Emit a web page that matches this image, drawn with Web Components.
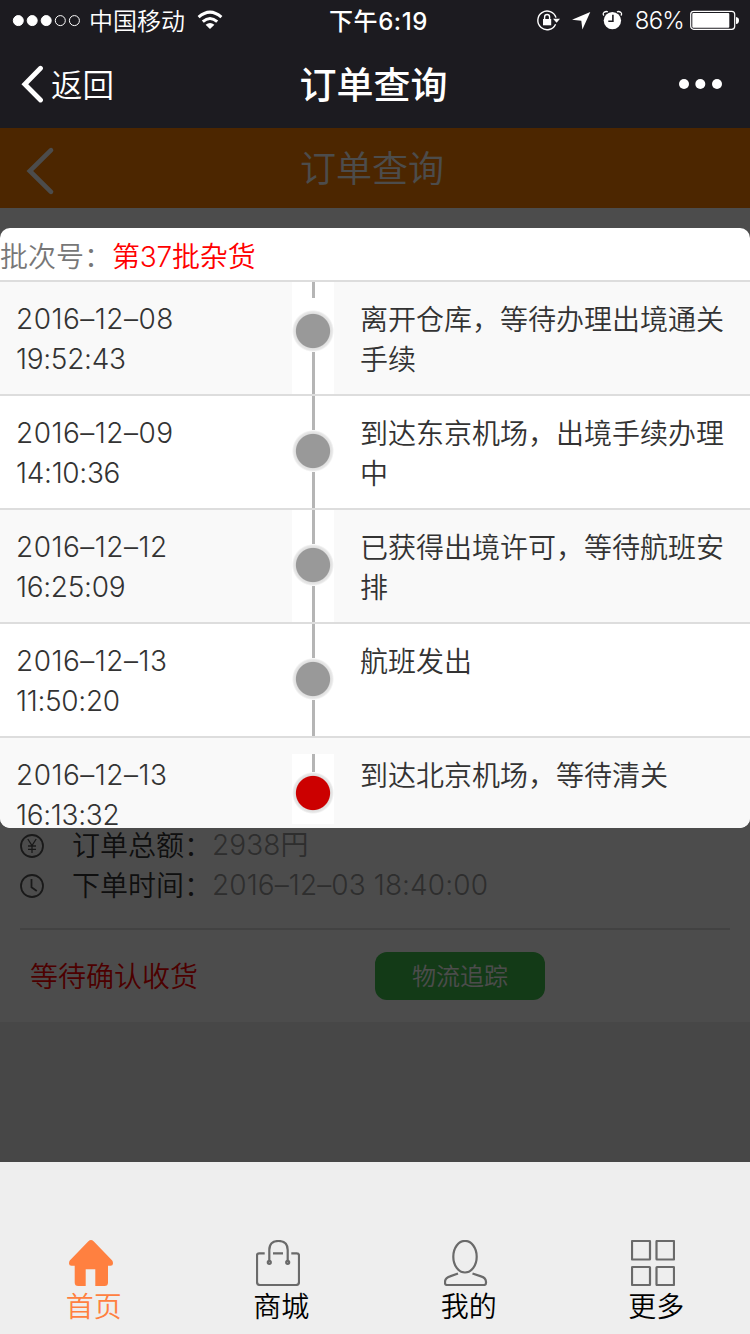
<!DOCTYPE html>
<html lang="zh-CN">
<head>
<meta charset="utf-8">
<title>订单查询</title>
<style>
    html, body {
        margin: 0;
        padding: 0;
    }
    body {
        width: 750px;
        height: 1334px;
        overflow: hidden;
        font-family: Inter, "Noto Sans CJK SC", sans-serif;
        font-size: 28px;
        font-weight: 350;
        line-height: 40px;
        background: #eee;
    }
</style>
</head>
<body>
<phone-screen>
    <status-bar slot="top" carrier="中国移动" time="下午6:19" battery="86%"></status-bar>
    <wechat-nav slot="top" back="返回">订单查询</wechat-nav>
    <order-page slot="page">
        <page-header slot="header">订单查询</page-header>
        <order-field icon="yen" label="订单总额：">2938円</order-field>
        <order-field icon="clock" label="下单时间：">2016–12–03 18:40:00</order-field>
        <order-actions slot="actions" status="等待确认收货">物流追踪</order-actions>
    </order-page>
    <tracking-popup slot="popup" label="批次号：" batch="第37批杂货">
        <tracking-row class="first odd" date="2016–12–08" time="19:52:43">离开仓库，等待办理出境通关手续</tracking-row>
        <tracking-row date="2016–12–09" time="14:10:36">到达东京机场，出境手续办理中</tracking-row>
        <tracking-row class="odd" date="2016–12–12" time="16:25:09">已获得出境许可，等待航班安排</tracking-row>
        <tracking-row date="2016–12–13" time="11:50:20">航班发出</tracking-row>
        <tracking-row class="last odd" date="2016–12–13" time="16:13:32">到达北京机场，等待清关</tracking-row>
    </tracking-popup>
    <tab-bar slot="tabs">
        <tab-item icon="home" class="active">首页</tab-item>
        <tab-item icon="bag">商城</tab-item>
        <tab-item icon="user">我的</tab-item>
        <tab-item icon="grid">更多</tab-item>
    </tab-bar>
</phone-screen>

<script>
const ICONS = {
    yen: `<svg width="24" height="24" viewBox="0 0 24 24" fill="none" stroke="currentColor" stroke-width="1.8"><circle cx="12" cy="12" r="11"/><path d="M7.8 5L12 11.5L16.2 5M12 11.5V19M8 12H16M8 15.4H16" stroke-width="1.3"/></svg>`,
    clock: `<svg width="24" height="24" viewBox="0 0 24 24" fill="none" stroke="currentColor" stroke-width="1.8"><circle cx="12" cy="12" r="11"/><path d="M11.5 5V13.2L16.8 17"/></svg>`,
    home: `<svg width="44" height="46" viewBox="0 0 44 46" fill="currentColor"><path d="M19.4 1.2Q22 -1 24.6 1.2L43.2 20.6Q44 21.6 44 23.4Q44 25.7 41.5 25.7H39V42.5Q39 46 35.5 46H26.3V29.3H16.7V46H9.2Q5.7 46 5.7 42.5V25.7H2.5Q0 25.7 0 23.4Q0 21.6 .8 20.6Z"/></svg>`,
    bag: `<svg width="44" height="46" viewBox="0 0 44 46" fill="none" stroke="#6a6a6a" stroke-width="2.2"><path d="M8.7 13.3H3.2Q1 13.3 1 15.5V42Q1 45 4 45H40Q43 45 43 42V15.5Q43 13.3 40.8 13.3H35.3M17 13.3H27"/><path d="M13.3 22V10Q13.3 1 22.5 1Q31.7 1 31.7 10V22"/><circle cx="13.3" cy="22.3" r="1.5"/><circle cx="31.7" cy="22.3" r="1.5"/></svg>`,
    user: `<svg width="44" height="46" viewBox="0 0 44 46" fill="none" stroke="#6a6a6a" stroke-width="2.2"><ellipse cx="21" cy="16.7" rx="11.7" ry="15.8"/><path d="M14 33.5L6 36.4Q1 38 1 42V43Q1 45 3 45H40Q42 45 42 43V42Q42 38 37 36.4L28.5 33.5"/></svg>`,
    grid: `<svg width="44" height="46" viewBox="0 0 44 46" fill="none" stroke="#6a6a6a" stroke-width="2.2"><rect x="1" y="1" width="18" height="18.5" rx=".5"/><rect x="25.5" y="1" width="17.5" height="18.5" rx=".5"/><rect x="1" y="27" width="18" height="18" rx=".5"/><rect x="25.5" y="27" width="17.5" height="18" rx=".5"/></svg>`
};

class PhoneScreen extends HTMLElement {
    constructor() {
        super();
        this.attachShadow({mode: "open"});
        this.shadowRoot.innerHTML = `
            <style>
                :host {
                    display: flex;
                    flex-direction: column;
                    height: 1334px;
                }
                #top {
                    height: 128px;
                    background: #1c1b20;
                    color: white;
                }
                #page {
                    flex: 1;
                    position: relative;
                    overflow: hidden;
                }
                #mask {
                    position: absolute;
                    inset: 0;
                    background: rgba(0,0,0,0.7);
                }
                #popup {
                    position: absolute;
                    top: 100px;
                    left: 0;
                    right: 0;
                }
            </style>
            <div id="top"><slot name="top"></slot></div>
            <div id="page">
                <slot name="page"></slot>
                <div id="mask"></div>
                <div id="popup"><slot name="popup"></slot></div>
            </div>
            <slot name="tabs"></slot>
        `;
    }
}

class StatusBar extends HTMLElement {
    constructor() {
        super();
        this.attachShadow({mode: "open"});
        this.shadowRoot.innerHTML = `
            <style>
                :host {
                    display: grid;
                    grid-template-columns: 1fr auto 1fr;
                    height: 40px;
                    font-size: 24px;
                    line-height: 42px;
                }
                div {
                    display: flex;
                    align-items: flex-start;
                }
                svg {
                    display: block;
                }
                #left {
                    padding-left: 12px;
                }
                #left span {
                    margin: 0 12px 0 8px;
                }
                #left span, #time {
                    line-height: 43px;
                }
                #time {
                    font-weight: 500;
                    letter-spacing: 0.6px;
                    padding-left: 7px;
                }
                #right {
                    justify-content: flex-end;
                    padding-right: 11px;
                }
                #right span {
                    margin: 0 6px 0 11px;
                    letter-spacing: -0.8px;
                }
            </style>
            <div id="left">
                <svg width="69" height="40" fill="white" stroke="white">
                    <circle cx="6.3" cy="20.6" r="5"/><circle cx="20.2" cy="20.6" r="5"/><circle cx="34.2" cy="20.6" r="5"/>
                    <circle cx="48.3" cy="20.6" r="5" fill="none"/><circle cx="62.4" cy="20.6" r="5" fill="none"/>
                </svg>
                <span>${this.getAttribute("carrier")}</span>
                <svg width="26" height="40" fill="none" stroke="white" stroke-width="3">
                    <path d="M1.6 17.2Q13 7 24.4 17.2" /><path d="M5.8 21.7Q13 15.3 20.2 21.7"/>
                    <path d="M13 29L8.6 24.7Q13 21.4 17.4 24.7Z" fill="white" stroke="none"/>
                </svg>
            </div>
            <div id="time">${this.getAttribute("time")}</div>
            <div id="right">
                <svg width="88" height="40" viewBox="536 0 88 40" fill="white">
                    <path d="M555.6 24.2A9.3 9.3 0 1 1 556 17.6" fill="none" stroke="white" stroke-width="1.4"/>
                    <path d="M553 18.8H560L556.6 22.8Z"/>
                    <rect x="543" y="19" width="8.2" height="6.3"/>
                    <path d="M544.6 19.5V17A2.5 2.5 0 0 1 549.6 17V19.5" fill="none" stroke="white" stroke-width="1.4"/>
                    <path d="M590.3 12L572 19.7L581.3 20.7L582.4 29.6Z"/>
                    <circle cx="612.4" cy="20.6" r="8.7"/>
                    <path d="M604 15.4Q602.4 14 604 12.4Q606.4 10.8 607.8 12M620.8 15.4Q622.4 14 620.8 12.4Q618.4 10.8 617 12" fill="none" stroke="white" stroke-width="1.3"/>
                    <path d="M612.9 14.8V21.2H608.3" fill="none" stroke="#1c1b20" stroke-width="1.6"/>
                </svg>
                <span>${this.getAttribute("battery")}</span>
                <svg width="49" height="40" fill="white">
                    <rect x=".7" y="11.3" width="44" height="18" rx="3" fill="none" stroke="white" stroke-width="1.2"/>
                    <rect x="2.3" y="13" width="37" height="14.8" rx="1"/>
                    <path d="M46 17Q49 17.5 49 20.4Q49 23.4 46 24Z"/>
                </svg>
            </div>
        `;
    }
}

class WechatNav extends HTMLElement {
    constructor() {
        super();
        this.attachShadow({mode: "open"});
        this.shadowRoot.innerHTML = `
            <style>
                :host {
                    display: grid;
                    grid-template-columns: 1fr auto 1fr;
                    align-items: center;
                    height: 88px;
                }
                #back {
                    display: flex;
                    align-items: center;
                    gap: 8px;
                    padding-left: 20px;
                    font-size: 31.5px;
                }
                #back span {
                    padding-top: 3px;
                }
                #title {
                    font-size: 37px;
                    font-weight: 500;
                    padding: 3px 3px 0 0;
                }
                #more {
                    justify-self: end;
                    margin-right: 28px;
                }
            </style>
            <div id="back">
                <svg width="23" height="38" fill="none" stroke="white" stroke-width="4.8"><path d="M20.5 3.2L4.8 19.2L20.5 35" stroke-linecap="round"/></svg>
                <span>${this.getAttribute("back")}</span>
            </div>
            <div id="title"><slot></slot></div>
            <svg id="more" width="43" height="10" fill="white"><circle cx="5" cy="5" r="5"/><circle cx="21.3" cy="5" r="5"/><circle cx="38" cy="5" r="5"/></svg>
        `;
    }
}

class OrderPage extends HTMLElement {
    constructor() {
        super();
        this.attachShadow({mode: "open"});
        this.shadowRoot.innerHTML = `
            <style>
                :host {
                    display: block;
                }
                #card {
                    display: flex;
                    flex-direction: column;
                    justify-content: flex-end;
                    box-sizing: border-box;
                    height: 814px;
                    background: white;
                }
                #fields {
                    padding: 0 20px 22px;
                }
            </style>
            <slot name="header"></slot>
            <div id="card">
                <div id="fields"><slot></slot></div>
                <slot name="actions"></slot>
            </div>
        `;
    }
}

class PageHeader extends HTMLElement {
    constructor() {
        super();
        this.attachShadow({mode: "open"});
        this.shadowRoot.innerHTML = `
            <style>
                :host {
                    display: grid;
                    grid-template-columns: 1fr auto 1fr;
                    height: 80px;
                    line-height: 83px;
                    font-size: 36px;
                    color: white;
                    background: #ff8000;
                }
                svg {
                    margin: 18px 0 0 25px;
                }
                div {
                    padding-right: 6px;
                }
            </style>
            <svg width="30" height="50" fill="none" stroke="white" stroke-width="4.6"><path d="M26 4.2L4.8 25L26 45.8" stroke-linecap="round"/></svg>
            <div><slot></slot></div>
        `;
    }
}

class OrderField extends HTMLElement {
    constructor() {
        super();
        this.attachShadow({mode: "open"});
        this.shadowRoot.innerHTML = `
            <style>
                :host {
                    display: flex;
                    height: 40px;
                    color: #999;
                    white-space: nowrap;
                }
                svg {
                    display: block;
                    margin: 8px 28px 0 0;
                    color: #555;
                }
                label {
                    width: 140px;
                    color: #333;
                }
                span {
                    letter-spacing: 0.1px;
                    margin-top: -1px;
                }
            </style>
            ${ICONS[this.getAttribute("icon")]}
            <label>${this.getAttribute("label")}</label>
            <span><slot></slot></span>
        `;
    }
}

class OrderActions extends HTMLElement {
    constructor() {
        super();
        this.attachShadow({mode: "open"});
        this.shadowRoot.innerHTML = `
            <style>
                :host {
                    display: grid;
                    grid-template-columns: 355px 170px;
                    margin: 0 20px;
                    padding: 22px 0;
                    border-top: 2px solid #ddd;
                }
                span {
                    padding-left: 10px;
                    line-height: 51px;
                    height: 48px;
                    color: #f00;
                }
                button {
                    height: 48px;
                    padding: 2px 0 0;
                    border: none;
                    border-radius: 12px;
                    font: 350 24px/46px Inter, "Noto Sans CJK SC", sans-serif;
                    color: white;
                    background: #40c14d;
                }
            </style>
            <span>${this.getAttribute("status")}</span>
            <button><slot></slot></button>
        `;
    }
}

class TrackingPopup extends HTMLElement {
    constructor() {
        super();
        this.attachShadow({mode: "open"});
        this.shadowRoot.innerHTML = `
            <style>
                :host {
                    display: block;
                    height: 600px;
                    overflow: hidden;
                    border-radius: 10px;
                    background: white;
                }
                header {
                    height: 52px;
                    line-height: 58px;
                    color: #777;
                    border-bottom: 2px solid #ddd;
                }
                b {
                    font-weight: inherit;
                    letter-spacing: -0.2px;
                    color: #f00;
                }
            </style>
            <header>${this.getAttribute("label")}<b>${this.getAttribute("batch")}</b></header>
            <slot></slot>
        `;
    }
}

class TrackingRow extends HTMLElement {
    constructor() {
        super();
        this.attachShadow({mode: "open"});
        this.shadowRoot.innerHTML = `
            <style>
                :host {
                    display: grid;
                    grid-template-columns: 276px 42px 1fr;
                    height: 112px;
                    padding: 0 16px;
                    border-bottom: 2px solid #ddd;
                    color: #333;
                    background: white;
                }
                :host(.odd) {
                    background: #f9f9f9;
                }
                #when {
                    padding-top: 17px;
                }
                #when span {
                    display: block;
                    letter-spacing: 0.5px;
                }
                #when span + span {
                    letter-spacing: -0.3px;
                }
                #text {
                    padding: 18px 0 0 26px;
                }
                #track {
                    background: white linear-gradient(#b5b5b5, #b5b5b5) center top / 3px 100% no-repeat;
                }
                #dot {
                    width: 42px;
                    height: 42px;
                    margin-top: 34px;
                    --dot: #999;
                    background: radial-gradient(circle, var(--dot) 16.6px, #e0e0e0 17.6px, #e8e8e8 19.4px, white 21px);
                }
                /* no line between the top stub and the first dot */
                :host(.first) #track {
                    background: linear-gradient(#b5b5b5, #b5b5b5) center top / 3px 16px no-repeat,
                        linear-gradient(#b5b5b5, #b5b5b5) center bottom / 3px 44px no-repeat, white;
                }
                :host(.first) #dot {
                    margin-top: 28px;
                }
                :host(.last) #track {
                    height: 70px;
                    margin-top: 16px;
                    background-size: 3px 20px;
                }
                :host(.last) #dot {
                    margin-top: 18px;
                    --dot: #c00;
                }
            </style>
            <div id="when">
                <span>${this.getAttribute("date")}</span>
                <span>${this.getAttribute("time")}</span>
            </div>
            <div id="track"><div style="display: flow-root"><div id="dot"></div></div></div>
            <div id="text"><slot></slot></div>
        `;
    }
}

class TabBar extends HTMLElement {
    constructor() {
        super();
        this.attachShadow({mode: "open"});
        this.shadowRoot.innerHTML = `
            <style>
                :host {
                    display: grid;
                    grid-template-columns: repeat(4, 1fr);
                    box-sizing: border-box;
                    height: 172px;
                    padding-top: 78px;
                    background: #eee;
                }
            </style>
            <slot></slot>
        `;
    }
}

class TabItem extends HTMLElement {
    constructor() {
        super();
        this.attachShadow({mode: "open"});
        this.shadowRoot.innerHTML = `
            <style>
                :host {
                    display: flex;
                    flex-direction: column;
                    align-items: center;
                    line-height: 42px;
                    color: black;
                }
                :host(.active) {
                    color: #ff8040;
                }
                svg {
                    display: block;
                    margin-right: 6px;
                }
            </style>
            ${ICONS[this.getAttribute("icon")]}
            <span><slot></slot></span>
        `;
    }
}

customElements.define("phone-screen", PhoneScreen);
customElements.define("status-bar", StatusBar);
customElements.define("wechat-nav", WechatNav);
customElements.define("order-page", OrderPage);
customElements.define("page-header", PageHeader);
customElements.define("order-field", OrderField);
customElements.define("order-actions", OrderActions);
customElements.define("tracking-popup", TrackingPopup);
customElements.define("tracking-row", TrackingRow);
customElements.define("tab-bar", TabBar);
customElements.define("tab-item", TabItem);
</script>
</body>
</html>
